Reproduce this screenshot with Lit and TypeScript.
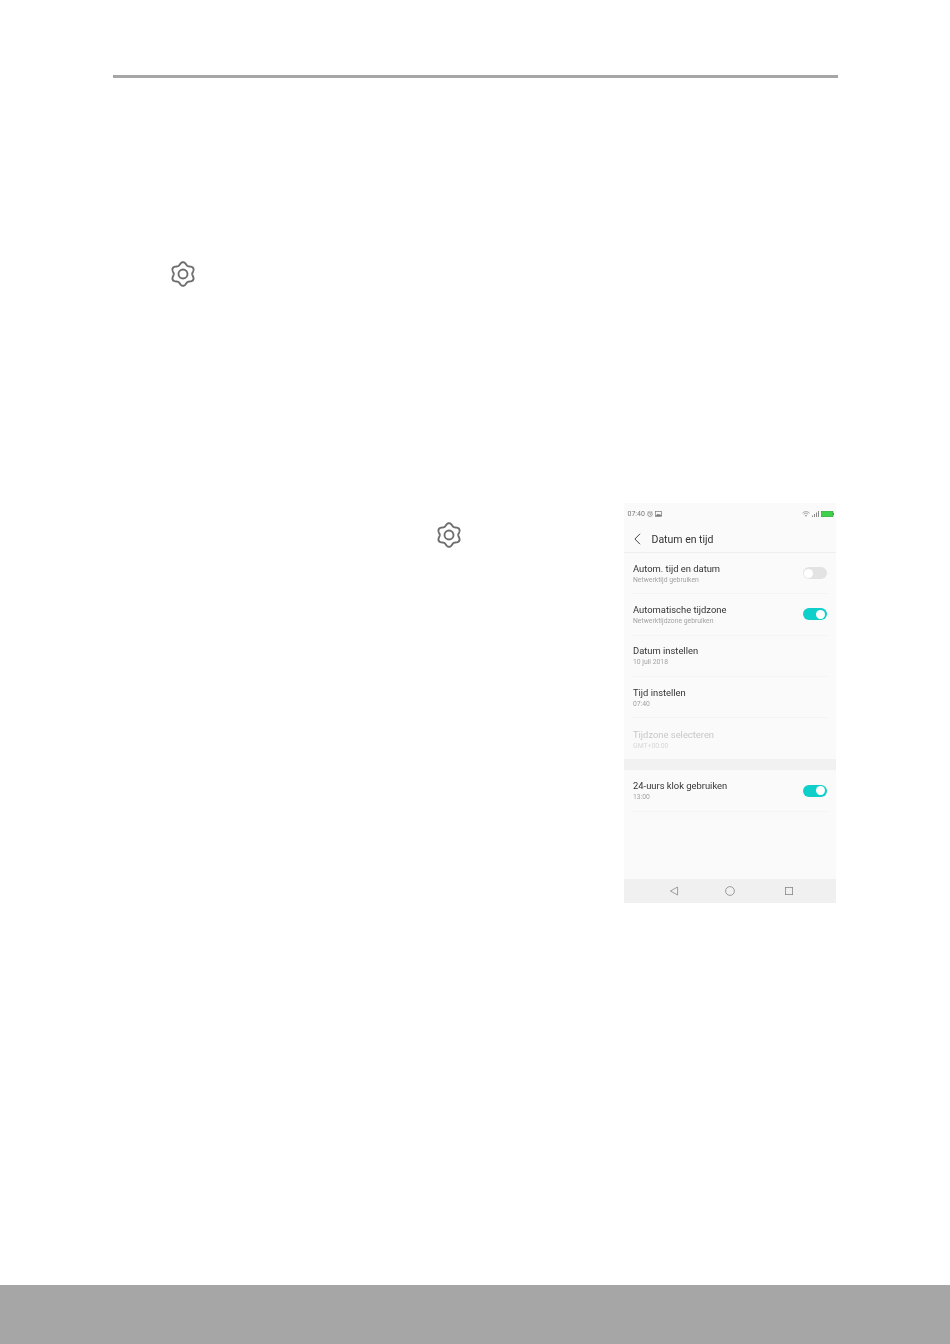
import { LitElement, html, css } from "lit";
import { customElement } from "lit/decorators.js";

// Six-lobed outline: lobes point straight up and down, as in the reference.
function gearPath() {
  const pts: string[] = [];
  const n = 144;
  for (let i = 0; i < n; i++) {
    const a = (i / n) * Math.PI * 2;
    const r = 10.5 + 1.3 * Math.cos(6 * a);
    pts.push(`${(13 + r * Math.sin(a)).toFixed(2)} ${(13 - r * Math.cos(a)).toFixed(2)}`);
  }
  return `M${pts.join("L")}Z`;
}

const gear = html`<svg class="gear" viewBox="0 0 26 26" fill="none" stroke="#6e6e6e" stroke-width="1.9" stroke-linejoin="round">
  <path d=${gearPath()}/>
  <circle cx="13" cy="13" r="4.5"/>
</svg>`;

const rows = [
  { t: "Autom. tijd en datum", s: "Netwerktijd gebruiken", toggle: "off" },
  { t: "Automatische tijdzone", s: "Netwerktijdzone gebruiken", toggle: "on" },
  { t: "Datum instellen", s: "10 juli 2018" },
  { t: "Tijd instellen", s: "07:40" },
  { t: "Tijdzone selecteren", s: "GMT+00:00", dim: true, last: true },
];

@customElement("app-root")
export class AppRoot extends LitElement {
  static styles = css`
    :host {
      display: block;
      width: 950px;
      height: 1344px;
      background: #fff;
      font-family: Roboto, "Noto Sans", sans-serif;
    }
    .page {
      height: 1344px;
      display: flex;
      flex-direction: column;
    }
    .rule {
      height: 3px;
      margin: 75px 112px 0 113px;
      background: #a6a6a6;
    }
    .gear { display: block; width: 26px; height: 26px; }
    .gear-a { margin: 183px 0 0 170px; }
    .content {
      display: flex;
      justify-content: space-between;
      align-items: flex-start;
      margin: 216px 114.5px 0 436px;
    }
    .gear-b { margin-top: 19px; }
    .phone {
      width: 212px;
      height: 400px;
      display: flex;
      flex-direction: column;
      background: #fafafa;
      filter: blur(0.35px);
    }
    .status {
      height: 24px;
      flex: none;
      display: flex;
      align-items: center;
      justify-content: space-between;
      padding: 0 1.5px 2px 4px;
      box-sizing: border-box;
      color: #777;
      font-size: 7px;
    }
    .status-left, .status-right { display: flex; align-items: center; gap: 2px; }
    .status svg { display: block; }
    .header {
      height: 26px;
      flex: none;
      display: flex;
      align-items: center;
      gap: 11px;
      padding: 0 0 1px 10px;
      border-bottom: 1px solid #eeeeee;
      box-sizing: border-box;
      color: #333;
      font-size: 10.5px;
    }
    .header svg { display: block; }
    .row {
      height: 41.3px;
      flex: none;
      box-sizing: border-box;
      margin: 0 9px 0 9.5px;
      display: flex;
      align-items: center;
      justify-content: space-between;
      border-bottom: 1px solid #f3f3f3;
    }
    .row.last { border-bottom: none; }
    .text { padding-top: 1.5px; }
    .title { font-size: 9.4px; line-height: 12px; color: #333; }
    .sub { font-size: 6.8px; line-height: 10px; color: #a3a3a3; }
    .dim .title { color: #c8c8c8; }
    .dim .sub { color: #d8d8d8; }
    .toggle {
      width: 24px;
      height: 12px;
      border-radius: 6px;
      display: flex;
      align-items: center;
      box-sizing: border-box;
      padding: 0 1.5px;
    }
    .toggle.on { background: #0ecfc9; justify-content: flex-end; }
    .toggle.off { background: #e3e3e3; }
    .knob { width: 9px; height: 9px; border-radius: 50%; background: #fff; }
    .gap { height: 11px; flex: none; background: #f1f1f1; }
    .spacer { flex: 1; }
    .nav {
      height: 24px;
      flex: none;
      background: #f0f0f0;
      display: flex;
      align-items: center;
      justify-content: center;
      gap: 46px;
      padding-left: 4px;
    }
    .nav svg { display: block; }
    .nav .square { margin-left: 3px; }
    .grow { flex: 1; }
    .footer { height: 59px; flex: none; background: #a6a6a6; }
  `;

  private row(r: { t: string; s: string; toggle?: string; dim?: boolean; last?: boolean }) {
    return html`<div class="row ${r.dim ? "dim" : ""} ${r.last ? "last" : ""}">
      <div class="text">
        <div class="title">${r.t}</div>
        <div class="sub">${r.s}</div>
      </div>
      ${r.toggle ? html`<div class="toggle ${r.toggle}"><div class="knob"></div></div>` : ""}
    </div>`;
  }

  render() {
    return html`<div class="page">
      <div class="rule"></div>
      <div class="gear-a">${gear}</div>
      <div class="content">
        <div class="gear-b">${gear}</div>
        <div class="phone">
          <div class="status">
            <div class="status-left">
              <span>07:40</span>
              <svg width="6" height="6" viewBox="0 0 6 6" fill="none" stroke="#777" stroke-width=".7"><circle cx="3" cy="3.2" r="2.3"/><path d="M3 2v1.3h1M.6 1 1.6.3M5.4 1 4.4.3"/></svg>
              <svg width="7" height="6" viewBox="0 0 7 6" fill="none" stroke="#777" stroke-width=".7"><rect x=".4" y=".6" width="6.2" height="4.8"/><path d="M1 5l1.8-2 1.2 1.2 1-.8L6.4 5" fill="#777"/></svg>
            </div>
            <div class="status-right">
              <svg width="8" height="6" viewBox="0 0 8 6" fill="none" stroke="#888" stroke-width=".7"><path d="M.5 2a5 5 0 0 1 7 0M1.7 3.2a3.3 3.3 0 0 1 4.6 0"/><path d="M4 5.8 2.9 4.4a1.7 1.7 0 0 1 2.2 0z" fill="#888" stroke="none"/></svg>
              <svg width="7" height="6" viewBox="0 0 7 6" fill="#888"><rect x="0" y="4.5" width="1" height="1.5"/><rect x="2" y="3" width="1" height="3"/><rect x="4" y="1.5" width="1" height="4.5"/><rect x="6" y="0" width="1" height="6"/></svg>
              <svg width="13" height="6" viewBox="0 0 13 6"><rect x="0" y="0" width="12" height="6" fill="#3fd14a" stroke="#666" stroke-width=".4"/><rect x="12" y="1.8" width="1" height="2.4" fill="#777"/></svg>
            </div>
          </div>
          <div class="header">
            <svg width="7" height="12" viewBox="0 0 7 12" fill="none" stroke="#444" stroke-width="1"><path d="M6 .8.9 6 6 11.2"/></svg>
            <span>Datum en tijd</span>
          </div>
          ${rows.map((r) => this.row(r))}
          <div class="gap"></div>
          ${this.row({ t: "24-uurs klok gebruiken", s: "13:00", toggle: "on" })}
          <div class="spacer"></div>
          <div class="nav">
            <svg width="10" height="10" viewBox="0 0 10 10" fill="none" stroke="#888" stroke-width=".8"><path d="M8.6 1 1.4 5l7.2 4z"/></svg>
            <svg width="10" height="10" viewBox="0 0 10 10" fill="none" stroke="#888" stroke-width=".8"><circle cx="5" cy="5" r="4.4"/></svg>
            <svg class="square" width="10" height="10" viewBox="0 0 10 10" fill="none" stroke="#888" stroke-width=".8"><rect x="1.4" y="1.4" width="7.2" height="7.2"/></svg>
          </div>
        </div>
      </div>
      <div class="grow"></div>
      <div class="footer"></div>
    </div>`;
  }
}
